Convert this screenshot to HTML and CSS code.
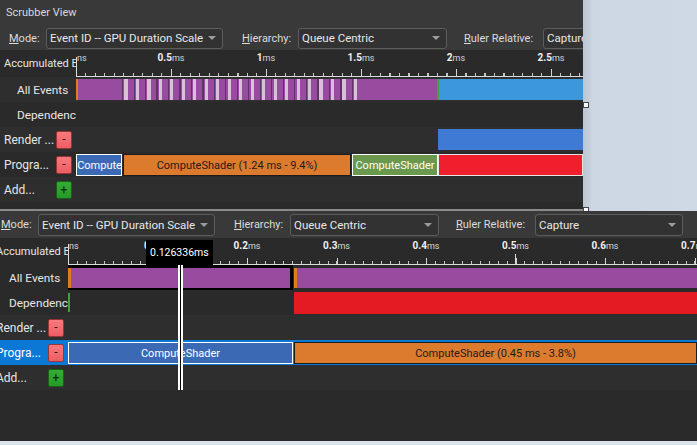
FILE: index.html
```html
<!DOCTYPE html>
<html>
<head>
<meta charset="utf-8">
<title>Scrubber View</title>
<link rel="stylesheet" href="styles.css">
</head>
<body>
<div class="screen">
  <div class="upper">
    <section class="panel panel-top">
      <div class="title">Scrubber View</div>
      <div class="toolbar">
        <span class="lbl lbl-mode"><u>M</u>ode:</span>
        <div class="combo combo-mode"><span class="ctext">Event ID -- GPU Duration Scale</span><i class="arrow"></i></div>
        <span class="lbl lbl-hier"><u>H</u>ierarchy:</span>
        <div class="combo combo-hier"><span class="ctext">Queue Centric</span><i class="arrow"></i></div>
        <span class="lbl lbl-rel"><u>R</u>uler Relative:</span>
        <div class="combo combo-rel"><span class="ctext">Capture</span><i class="arrow"></i></div>
      </div>
      <div class="timeline">
        <div class="row ruler-row">
          <div class="label">Accumulated E</div>
          <div class="track ruler ruler-top">
            <span class="tick tick-start">ns</span>
            <span class="tick" style="left:95px"><b>0.5</b>ms</span>
            <span class="tick" style="left:190px"><b>1</b>ms</span>
            <span class="tick" style="left:285px"><b>1.5</b>ms</span>
            <span class="tick" style="left:380px"><b>2</b>ms</span>
            <span class="tick" style="left:475px"><b>2.5</b>ms</span>
          </div>
        </div>
        <div class="row row-a">
          <div class="label child">All Events</div>
          <div class="track">
            <div class="bar orange" style="left:0;width:2px"></div>
            <div class="bar purple" style="left:2px;width:44px"></div>
            <div class="bar stripes" style="left:46px;width:230px"></div>
            <div class="bar stripe-first" style="left:276px;width:85px"></div>
            <div class="bar green" style="left:361px;width:2px"></div>
            <div class="bar sky" style="left:363px;width:144px"></div>
          </div>
        </div>
        <div class="row row-b">
          <div class="label child">Dependenc</div>
          <div class="track"></div>
        </div>
        <div class="row row-a">
          <div class="label"><span class="name">Render ...</span><span class="btn btn-del">-</span></div>
          <div class="track">
            <div class="bar royal" style="left:362px;width:145px"></div>
          </div>
        </div>
        <div class="row row-b prog">
          <div class="label"><span class="name">Progra...</span><span class="btn btn-del">-</span></div>
          <div class="track">
            <div class="bar pbar p-blue left-text" style="left:0;width:46px">Compute</div>
            <div class="bar pbar p-orange" style="left:47px;width:228px">ComputeShader (1.24 ms - 9.4%)</div>
            <div class="bar pbar p-green" style="left:276px;width:86px">ComputeShader</div>
            <div class="bar pbar p-red" style="left:362px;width:145px"></div>
          </div>
        </div>
        <div class="row row-a">
          <div class="label"><span class="name">Add...</span><span class="btn btn-add">+</span></div>
          <div class="track"></div>
        </div>
      </div>
    </section>
    <div class="desk">
      <span class="handle handle-mid"></span>
      <span class="handle handle-low"></span>
    </div>
  </div>

  <section class="panel panel-bottom">
    <div class="shift">
      <div class="toolbar toolbar-b">
        <span class="lbl lbl-mode"><u>M</u>ode:</span>
        <div class="combo combo-mode"><span class="ctext">Event ID -- GPU Duration Scale</span><i class="arrow"></i></div>
        <span class="lbl lbl-hier"><u>H</u>ierarchy:</span>
        <div class="combo combo-hier"><span class="ctext">Queue Centric</span><i class="arrow"></i></div>
        <span class="lbl lbl-rel"><u>R</u>uler Relative:</span>
        <div class="combo combo-rel"><span class="ctext">Capture</span><i class="arrow"></i></div>
      </div>
      <div class="timeline timeline-b">
        <div class="row ruler-row">
          <div class="label">Accumulated E</div>
          <div class="track ruler ruler-bottom">
            <span class="tick tick-start">ns</span>
            <span class="tick" style="left:89.5px"><b>0.1</b>ms</span>
            <span class="tick" style="left:179px"><b>0.2</b>ms</span>
            <span class="tick" style="left:268.5px"><b>0.3</b>ms</span>
            <span class="tick" style="left:358px"><b>0.4</b>ms</span>
            <span class="tick" style="left:447.5px"><b>0.5</b>ms</span>
            <span class="tick" style="left:537px"><b>0.6</b>ms</span>
            <span class="tick" style="left:626.5px"><b>0.7</b>ms</span>
          </div>
        </div>
        <div class="row row-b">
          <div class="label child">All Events</div>
          <div class="track">
            <div class="selbox" style="left:-3px;width:228px"></div>
            <div class="bar bar-b orange" style="left:226px;width:3px"></div>
            <div class="bar bar-b purple" style="left:229px;width:400px"></div>
          </div>
        </div>
        <div class="row row-b">
          <div class="label child">Dependenc</div>
          <div class="track">
            <div class="bar dep-green" style="left:0;width:2px"></div>
            <div class="bar dep-red" style="left:226px;width:403px"></div>
          </div>
        </div>
        <div class="row row-a">
          <div class="label"><span class="name">Render ...</span><span class="btn btn-del">-</span></div>
          <div class="track"></div>
        </div>
        <div class="row row-sel prog">
          <div class="label"><span class="name">Progra...</span><span class="btn btn-del">-</span></div>
          <div class="track">
            <div class="bar pbar p-blue" style="left:0;width:225px">ComputeShader</div>
            <div class="bar pbar p-orange" style="left:226px;width:403px">ComputeShader (0.45 ms - 3.8%)</div>
          </div>
        </div>
        <div class="row row-a">
          <div class="label"><span class="name">Add...</span><span class="btn btn-add">+</span></div>
          <div class="track"></div>
        </div>
        <div class="tooltip">0.126336ms</div>
        <div class="scrubline"></div>
      </div>
    </div>
  </section>
  <div class="strip"></div>
</div>
</body>
</html>
```

FILE: styles.css
```css
* { box-sizing: border-box; }
html, body { margin: 0; padding: 0; }
body {
  width: 697px;
  height: 445px;
  overflow: hidden;
  background: #dce3ec;
  font-family: Roboto, "Liberation Sans", sans-serif;
  font-size: 11px;
  color: #e4e4e4;
}
.screen { display: flex; flex-direction: column; height: 445px; }
.upper { display: flex; height: 211px; flex: none; }

.panel { background: #2a2a2a; overflow: hidden; position: relative; }
.panel-top {
  width: 583px;
  flex: none;
  border-bottom: 2px solid #8a8a8a;
}
.desk {
  flex: 1;
  position: relative;
  background: linear-gradient(90deg, #bcc5d3 0, #c7d0dd 7px, #cdd6e3 9px, #cfd8e5 100%);
}
.handle {
  position: absolute;
  left: 0;
  width: 6px;
  height: 6px;
  background: #fff;
  border: 1px solid #444;
}
.handle-mid { top: 102px; }
.handle-low { top: 207px; }

.title {
  height: 26px;
  line-height: 26px;
  padding-left: 6px;
  background: #393939;
  color: #d8d8d8;
}
.toolbar {
  display: flex;
  align-items: center;
  height: 24px;
  padding-left: 9px;
  background: #393939;
  white-space: nowrap;
}
.toolbar-b { height: 27px; }
.lbl { flex: none; color: #dcdcdc; }
.lbl u { text-decoration: underline; text-underline-offset: 1px; }
.lbl-mode { width: 37px; }
.lbl-hier { width: 56px; margin-left: 19px; }
.lbl-rel { width: 79px; margin-left: 17px; }
.combo {
  flex: none;
  display: flex;
  align-items: center;
  height: 21px;
  border: 1px solid #5c5c5c;
  border-radius: 3px;
  background: #323232;
  padding-left: 3px;
  color: #e8e8e8;
}
.toolbar-b .combo { height: 22px; }
.combo-mode { width: 177px; }
.combo-hier { width: 149px; }
.combo-rel { width: 148px; }
.ctext { flex: 1; overflow: hidden; font-size: 11.5px; }
.arrow {
  flex: none;
  width: 0;
  height: 0;
  margin-right: 6px;
  border-left: 4px solid transparent;
  border-right: 4px solid transparent;
  border-top: 4px solid #9c9c9c;
}

.shift { margin-left: -8px; width: 705px; }
.panel-bottom { height: 230px; flex: none; }
.strip { flex: 1; }

.timeline { display: flex; flex-direction: column; }
.timeline-b { position: relative; }
.row { display: flex; height: 25px; flex: none; }
.ruler-row { height: 27px; background: #2a2a2a; }
.row-a { background: #2e2e2e; }
.row-b { background: #2a2a2a; }
.row-sel { background: #0a78d4; }
.row-sel .label { color: #fff; }

.label {
  width: 76px;
  flex: none;
  display: flex;
  align-items: center;
  padding-left: 4px;
  white-space: nowrap;
  overflow: hidden;
  color: #e6e6e6;
  font-size: 12px;
}
.ruler-row .label { font-size: 11px; }
.label.child { padding-left: 17px; font-size: 11.8px; }
.name { flex: none; }
.btn {
  flex: none;
  margin-left: auto;
  margin-right: 4px;
  width: 16px;
  height: 18px;
  border-radius: 2px;
  border: 1px solid;
  text-align: center;
  line-height: 15px;
  font-size: 12px;
}
.btn-del {
  background: linear-gradient(#f7797d, #ec5e63);
  border-color: #9a3338;
  color: #3a1111;
}
.btn-add {
  background: linear-gradient(#34ad34, #279a27);
  border-color: #17601a;
  color: #0b220b;
  line-height: 16px;
}

.track { flex: 1; position: relative; overflow: hidden; font-size: 11px; }

.ruler { font-size: 10px; color: #e8e8e8; }
.ruler-top {
  background:
    linear-gradient(#dcdcdc, #dcdcdc) left bottom / 100% 1px no-repeat,
    linear-gradient(#dcdcdc, #dcdcdc) left bottom / 1px 20px no-repeat,
    repeating-linear-gradient(90deg, #d4d4d4 0 1px, transparent 1px 95px) left bottom / 100% 8px no-repeat,
    repeating-linear-gradient(90deg, #c8c8c8 0 1px, transparent 1px 9.5px) left bottom / 100% 4px no-repeat;
}
.ruler-bottom {
  background:
    linear-gradient(#dcdcdc, #dcdcdc) left bottom / 100% 1px no-repeat,
    linear-gradient(#dcdcdc, #dcdcdc) left bottom / 1px 21px no-repeat,
    linear-gradient(#dcdcdc, #dcdcdc) 447px bottom / 1px 11px no-repeat,
    repeating-linear-gradient(90deg, #d4d4d4 0 1px, transparent 1px 89.5px) left bottom / 100% 7px no-repeat,
    repeating-linear-gradient(90deg, #c8c8c8 0 1px, transparent 1px 8.95px) left bottom / 100% 4px no-repeat;
}
.tick {
  position: absolute;
  top: 3px;
  line-height: 10px;
  transform: translateX(-50%);
  white-space: nowrap;
  font-size: 9px;
  color: #d8d8d8;
}
.tick b { font-size: 10px; font-weight: 700; color: #f0f0f0; }
.tick-start { left: 1px; transform: none; }

.bar { position: absolute; top: 2px; height: 21px; }
.bar-b { top: 3px; height: 20px; }
.orange { background: #e07b22; }
.purple { background: #984ca0; }
.green { background: #3fa046; }
.sky { background: #3d97dc; }
.royal { background: #3f7bd4; }
.stripes {
  background: repeating-linear-gradient(90deg,
    #5e3464 0 1px, #984ca0 1px 2px, #d8c0db 2px 5.5px, #984ca0 5.5px 11.5px);
}
.stripe-first {
  background: linear-gradient(90deg,
    #5e3464 0 1px, #984ca0 1px 2px, #d8c0db 2px 5px, #984ca0 5px);
}

.prog .pbar {
  top: 2px;
  height: 22px;
  border: 1px solid;
  display: flex;
  align-items: center;
  justify-content: center;
  white-space: nowrap;
  overflow: hidden;
}
.p-blue { background: #3c69b4; border-color: #2a4f8c; color: #fff; }
.p-orange { background: #dc7a2e; border-color: #b0601f; color: #1c1c1c; }
.p-green { background: #6a984c; border-color: #53803a; color: #fff; }
.p-red { background: #ef1f2d; border-color: #c9141f; }
.left-text { justify-content: flex-start; padding-left: 1px; }

.selbox {
  position: absolute;
  top: 0;
  height: 25px;
  border: 3px solid #000;
  border-bottom-width: 2px;
  background: linear-gradient(90deg, #e07b22 0 3px, #984ca0 3px);
}
.dep-green { top: 3px; height: 19px; background: #3fa046; }
.dep-red { top: 2px; height: 22px; background: #e41b23; }

.tooltip {
  position: absolute;
  left: 154px;
  top: 2px;
  width: 67px;
  height: 25px;
  background: #000;
  color: #fff;
  font-size: 10.5px;
  padding-left: 4px;
  display: flex;
  align-items: center;
}
.scrubline {
  position: absolute;
  left: 186px;
  top: 27px;
  width: 5px;
  height: 125px;
  background: linear-gradient(90deg, #fff 0 2px, #000 2px 3px, #fff 3px 5px);
}
```
